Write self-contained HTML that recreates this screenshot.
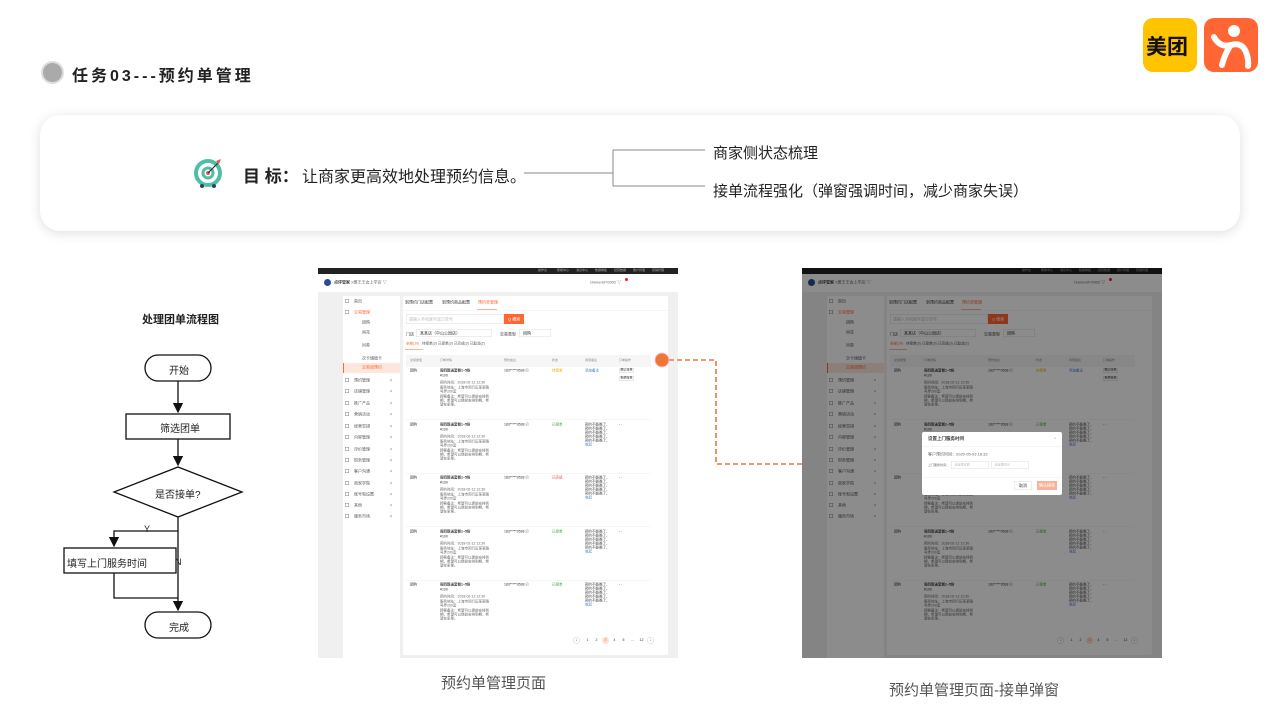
<!DOCTYPE html>
<html><head><meta charset="utf-8">
<style>
*{margin:0;padding:0;box-sizing:border-box}
body{width:1280px;height:720px;background:#fff;position:relative;overflow:hidden;font-family:"Liberation Sans","Noto Sans CJK SC",sans-serif;color:#222}
.a{position:absolute}
.t{white-space:nowrap}
.shot{position:absolute;width:360px;height:390px;background:#f0f0f0;overflow:hidden;color:#333}
.inner{position:absolute;left:0;top:0;width:720px;height:780px;transform:scale(0.5);transform-origin:0 0;font-size:8px;line-height:1.15}
.inner .a{white-space:nowrap}
</style></head><body>

<div class="a" style="left:41px;top:61px;width:23px;height:23px;border-radius:50%;background:#aaa;border:2px solid #ddd"></div>
<div class="a t" style="left:72px;top:62px;font-size:16px;font-weight:bold;letter-spacing:3px">任务03---预约单管理</div>

<div class="a" style="left:1143px;top:18px;width:54px;height:54px;border-radius:10px;background:#ffc300"></div>
<div class="a t" style="left:1146px;top:31px;font-size:21px;font-weight:bold;color:#111">美团</div>
<div class="a" style="left:1204px;top:18px;width:54px;height:54px;border-radius:10px;background:#ff6633"></div>
<svg class="a" style="left:1204px;top:18px" width="54" height="54" viewBox="0 0 54 54">
<circle cx="30" cy="13" r="6" fill="#fff"/>
<path d="M10 19 Q16 30 27 27 Q38 24 42 34 Q45 42 44 48" stroke="#fff" stroke-width="6" fill="none" stroke-linecap="round"/>
<path d="M26 28 Q20 38 18 47" stroke="#fff" stroke-width="6" fill="none" stroke-linecap="round"/>
</svg>

<div class="a" style="left:40px;top:115px;width:1200px;height:116px;border-radius:20px;background:#fff;box-shadow:0 2px 12px rgba(0,0,0,0.13)"></div>
<svg class="a" style="left:193px;top:156px" width="32" height="34" viewBox="0 0 32 34">
<circle cx="15" cy="17" r="12" fill="none" stroke="#4dbfa8" stroke-width="4"/>
<circle cx="15" cy="17" r="5" fill="none" stroke="#4dbfa8" stroke-width="3"/>
<circle cx="15" cy="17" r="2" fill="#e55"/>
<line x1="15" y1="17" x2="25" y2="7" stroke="#333" stroke-width="1.2"/>
<path d="M23 5 l5 -2 l-2 5z" fill="#e55"/>
<circle cx="9" cy="30" r="2" fill="#345"/><circle cx="21" cy="30" r="2" fill="#345"/>
</svg>
<div class="a t" style="left:243px;top:162px;font-size:17px;font-weight:bold">目 标：</div>
<div class="a t" style="left:302px;top:163px;font-size:16px">让商家更高效地处理预约信息。</div>
<svg class="a" style="left:520px;top:140px" width="200" height="60">
<path d="M4 33 H93 M93 10 V46 M93 10 H185 M93 46 H185" stroke="#888" fill="none"/>
</svg>
<div class="a t" style="left:713px;top:142px;font-size:15px">商家侧状态梳理</div>
<div class="a t" style="left:713px;top:180px;font-size:15px">接单流程强化（弹窗强调时间，减少商家失误）</div>

<div class="a t" style="left:142px;top:311px;font-size:11px;font-weight:bold">处理团单流程图</div>
<svg class="a" style="left:0;top:340px" width="300" height="310" viewBox="0 340 300 310">
<defs><marker id="ar" markerWidth="8" markerHeight="8" refX="7" refY="4" orient="auto"><path d="M0 0 L8 4 L0 8z" fill="#111"/></marker></defs>
<g fill="#fff" stroke="#111" stroke-width="1.3">
<rect x="145" y="355" width="66" height="26" rx="13"/>
<rect x="126" y="414" width="104" height="25"/>
<path d="M178 467 L242 492 L178 517 L114 492z"/>
<rect x="64" y="548" width="112" height="25"/>
<rect x="145" y="612" width="66" height="26" rx="13"/>
</g>
<g stroke="#111" stroke-width="1.3" fill="none">
<path d="M178 381 V412" marker-end="url(#ar)"/>
<path d="M178 439 V465" marker-end="url(#ar)"/>
<path d="M178 517 V610" marker-end="url(#ar)"/>
<path d="M178 531 H114 V546" marker-end="url(#ar)"/>
<path d="M114 573 V598 H178"/>
</g>
</svg>
<div class="a t" style="left:169px;top:362px;font-size:10px">开始</div>
<div class="a t" style="left:160px;top:420px;font-size:10px">筛选团单</div>
<div class="a t" style="left:155px;top:486px;font-size:10px">是否接单?</div>
<div class="a t" style="left:67px;top:555px;font-size:10px">填写上门服务时间</div>
<div class="a t" style="left:169px;top:619px;font-size:10px">完成</div>
<div class="a t" style="left:144px;top:524px;font-size:9px">Y</div>
<div class="a t" style="left:175px;top:557px;font-size:9px">N</div>

<div id="s1" class="shot" style="left:318px;top:268px"></div>
<div id="s2" class="shot" style="left:802px;top:268px"></div>

<svg class="a" style="left:650px;top:345px" width="160" height="130">
<path d="M19 15 H66 V119 H152" stroke="#ee7733" stroke-width="1.6" stroke-dasharray="5 3" fill="none"/>
<circle cx="12" cy="15" r="7" fill="#ee7733" stroke="#fbd" stroke-width="1"/>
</svg>

<div class="a t" style="left:441px;top:672px;font-size:15px;color:#555">预约单管理页面</div>
<div class="a t" style="left:889px;top:679px;font-size:15px;color:#555">预约单管理页面-接单弹窗</div>

<script>
function build(el,modal){
 let h='';
 h+='<div class="a" style="left:0;top:0;width:360px;height:6px;background:#222"></div>';
 ['操作台','帮助中心','消息中心','数据看板','经营数据','账户管理','营销管理'].forEach((s,i)=>h+=`<div class="a" style="left:${220+i*19}px;top:1px;color:#aaa;font-size:3px">${s}</div>`);
 h+='<div class="a" style="left:0;top:6px;width:360px;height:18px;background:#fff"></div>';
 h+='<div class="a" style="left:6px;top:11px;width:7px;height:7px;border-radius:50%;background:#2a4d8f"></div>';
 h+='<div class="a" style="left:16px;top:12px;font-weight:bold;font-size:4px">点评管家</div><div class="a" style="left:33px;top:12px;color:#666;font-size:4px">X雅王王女上学店 ▽</div>';
 h+='<div class="a" style="left:272px;top:12px;color:#666;font-size:4px">Ownerid=0002 ▽</div><div class="a" style="left:307px;top:10px;width:3px;height:3px;border-radius:50%;background:#e22"></div>';
 h+='<div class="a" style="left:25px;top:28px;width:57px;height:362px;background:#fff"></div>';
 const side=[['首页',0],['交易管理',1],['团购',2],['闲花',2],['问券',2],['次卡储值卡',2],['交易团预约',3],['预约管理',0],['店铺管理',0],['推广产品',0],['营销活动',0],['经营举措',0],['内容管理',0],['评价管理',0],['财务管理',0],['客户沟通',0],['商家学院',0],['账号和设置',0],['其他',0],['服务市场',0]];
 side.forEach(([s,k],i)=>{
  const yy=[31,42,52,62,75,88,97,110,121,133,144,156,167,179,190,201,213,224,235,246][i];
  if(k==3)h+=`<div class="a" style="left:25px;top:${yy-2}px;width:57px;height:10px;background:#fde7dc;border-left:1px solid #f63"></div>`;
  const col=k==1||k==3?'#f63':'#555';
  const x=k>=2?44:36;
  if(k<2)h+=`<div class="a" style="left:27px;top:${yy}px;width:4px;height:4px;border:0.5px solid #888"></div>`;
  h+=`<div class="a" style="left:${x}px;top:${yy}px;color:${col};font-size:4px">${s}</div>`;
  if(i>=7)h+=`<div class="a" style="left:72px;top:${yy}px;color:#999;font-size:4px">▾</div>`;
 });
 h+='<div class="a" style="left:85px;top:28px;width:265px;height:359px;background:#fff;border-radius:2px"></div>';
 h+='<div class="a" style="left:87px;top:32px;font-size:4px">到预约门店配置</div><div class="a" style="left:124px;top:32px;font-size:4px">到预约商品配置</div><div class="a" style="left:160px;top:32px;color:#f63;font-size:4px">预约单管理</div>';
 h+='<div class="a" style="left:159px;top:41px;width:20px;height:0.7px;background:#f63"></div><div class="a" style="left:85px;top:42px;width:265px;height:0.5px;background:#eee"></div>';
 h+='<div class="a" style="left:88px;top:46px;width:98px;height:10px;border:0.5px solid #ddd"></div><div class="a" style="left:91px;top:49px;color:#bbb;font-size:4px">请输入手机尾号或订单号</div>';
 h+='<div class="a" style="left:186px;top:46px;width:20px;height:10px;background:#f63"></div><div class="a" style="left:190px;top:49px;color:#fff;font-size:4px">Q 搜索</div>';
 h+='<div class="a" style="left:88px;top:64px;font-size:4px">门店</div><div class="a" style="left:98px;top:61px;width:76px;height:8px;border:0.5px solid #ddd"></div><div class="a" style="left:102px;top:63px;font-size:4px">某某店（中山公园店）</div>';
 h+='<div class="a" style="left:182px;top:64px;font-size:4px">交易类型</div><div class="a" style="left:201px;top:61px;width:32px;height:8px;border:0.5px solid #ddd"></div><div class="a" style="left:205px;top:63px;font-size:4px">团购</div>';
 ['全部(10)','待接单(3)','已接单(3)','已完成(3)','已取消(2)'].forEach((s,i)=>h+=`<div class="a" style="left:${88+i*16}px;top:74px;color:${i?'#555':'#f63'};font-size:3.5px">${s}</div>`);
 h+='<div class="a" style="left:87px;top:81px;width:18px;height:0.7px;background:#f63"></div>';
 h+='<div class="a" style="left:88px;top:87px;width:245px;height:12px;background:#f6f6f6"></div>';
 ['交易类型','订单详情','预约信息','状态','商家备注','订单操作'].forEach((s,i)=>h+=`<div class="a" style="left:${[92,122,186,234,267,301][i]}px;top:91px;color:#888;font-size:3px">${s}</div>`);
 const st=[['待接单','#e9b000'],['已接单','#4a4'],['已完成','#e44'],['已接单','#4a4'],['已接单','#4a4']];
 for(let r=0;r<5;r++){
  const ry=Math.round(101+r*53.5);
  const f='font-size:3.5px;';
  h+=`<div class="a" style="left:92px;top:${ry}px;${f}">团购</div>`;
  h+=`<div class="a" style="left:122px;top:${ry}px;font-weight:bold;${f}">周四新送套餐1~5份</div><div class="a" style="left:122px;top:${ry+5}px;${f}">¥100</div>`;
  h+=`<div class="a" style="left:122px;top:${ry+12}px;color:#666;${f}">预约时间：2018-02-12 12:30</div><div class="a" style="left:122px;top:${ry+17}px;color:#666;${f}">服务地址：上海市闵行区某某路</div><div class="a" style="left:122px;top:${ry+21}px;color:#666;${f}">号弄200室</div>`;
  h+=`<div class="a" style="left:122px;top:${ry+26}px;color:#666;${f}">顾客备注：希望可以提前安排到</div><div class="a" style="left:122px;top:${ry+30}px;color:#666;${f}">期，希望可以提前安排到期，希</div><div class="a" style="left:122px;top:${ry+34}px;color:#666;${f}">望在家里。</div>`;
  h+=`<div class="a" style="left:186px;top:${ry}px;${f}">183*****9538 ⓒ</div>`;
  h+=`<div class="a" style="left:234px;top:${ry}px;color:${st[r][1]};${f}">${st[r][0]}</div>`;
  if(r==0){h+=`<div class="a" style="left:267px;top:${ry}px;color:#3a7bd5;${f}">添加备注</div>`;
   h+=`<div class="a" style="left:301px;top:${ry-1}px;width:15px;height:5px;border:0.5px solid #ccc;border-radius:1px;font-size:3px;padding-left:1px">确认接单</div><div class="a" style="left:301px;top:${ry+7}px;width:15px;height:5px;border:0.5px solid #ccc;border-radius:1px;font-size:3px;padding-left:1px">拒绝接单</div>`;}
  else{for(let k=0;k<5;k++)h+=`<div class="a" style="left:267px;top:${ry+k*4}px;color:#444;${f}">预约不能晚了，</div>`;h+=`<div class="a" style="left:267px;top:${ry+20}px;color:#3a7bd5;${f}">收起</div><div class="a" style="left:301px;top:${ry}px;${f}">- -</div>`;}
  if(r<4)h+=`<div class="a" style="left:88px;top:${ry+50}px;width:245px;height:0.5px;background:#eee"></div>`;
 }
 ['‹','1','2','3','4','5','...','12','›'].forEach((s,i)=>{const x=[255,266,275,284,293,302,311,320,329][i];const c=i==3;h+=`<div class="a" style="left:${x}px;top:369px;width:7px;height:7px;border-radius:50%;${c?'background:#fde0d0;color:#f63;':''}${i==0||i==8?'border:0.5px solid #ccc;':''}text-align:center;line-height:7px;font-size:3.5px">${s}</div>`;});
 if(modal){
  h+='<div class="a" style="left:0;top:0;width:360px;height:390px;background:rgba(0,0,0,0.45)"></div>';
  h+='<div class="a" style="left:120px;top:164px;width:140px;height:63px;background:#fff;border-radius:2px"></div>';
  h+='<div class="a" style="left:126px;top:168px;font-weight:bold;font-size:4.5px">设置上门服务时间</div><div class="a" style="left:252px;top:168px;color:#aaa;font-size:4px">×</div>';
  h+='<div class="a" style="left:120px;top:178px;width:140px;height:0.5px;background:#eee"></div>';
  h+='<div class="a" style="left:126px;top:184px;color:#666;font-size:4px">客户预约时间：2020-05-03 18:32</div>';
  h+='<div class="a" style="left:126px;top:196px;color:#666;font-size:3px">上门服务时间：</div><div class="a" style="left:149px;top:193px;width:38px;height:8px;border:0.5px solid #ddd;color:#bbb;padding:2px 0 0 3px;font-size:3px">请选择日期</div><div class="a" style="left:189px;top:193px;width:38px;height:8px;border:0.5px solid #ddd;color:#bbb;padding:2px 0 0 3px;font-size:3px">请选择时间</div>';
  h+='<div class="a" style="left:120px;top:209px;width:140px;height:0.5px;background:#eee"></div>';
  h+='<div class="a" style="left:212px;top:213px;width:18px;height:9px;border:0.5px solid #ddd;text-align:center;line-height:9px;font-size:4px">取消</div><div class="a" style="left:235px;top:213px;width:20px;height:9px;background:#f8b49a;color:#fff;text-align:center;line-height:9px;font-size:4px">确认接单</div>';
 }
 h=h.replace(/(\d+(?:\.\d+)?)px/g,(m,n)=>(parseFloat(n)*2)+'px');
 el.innerHTML='<div class="inner">'+h+'</div>';
}
build(document.getElementById('s1'),false);
build(document.getElementById('s2'),true);
</script>
</body></html>
